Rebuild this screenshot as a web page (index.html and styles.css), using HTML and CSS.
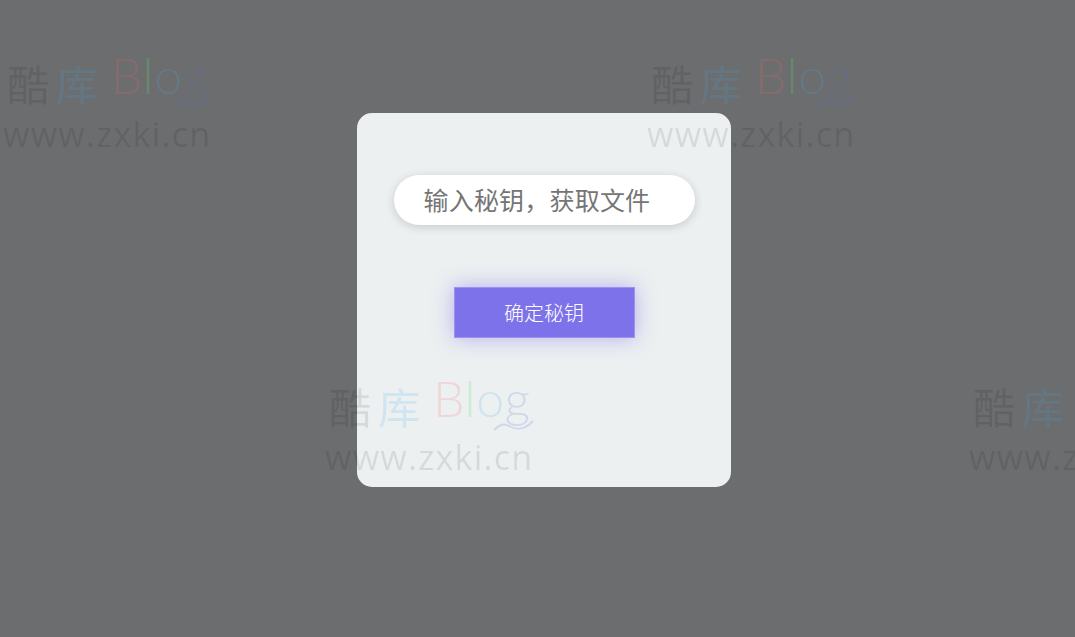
FILE: index.html
```html
<!DOCTYPE html>
<html>
<head>
    <meta charset="utf-8">
    <link rel="stylesheet" href="styles.css">
</head>
<body>
    <div class="dialog">
        <input class="key-input" type="text" placeholder="输入秘钥，获取文件">
        <button class="key-btn">确定秘钥</button>
    </div>

    <!-- watermark tiles, they lie over the whole page -->
    <div class="mark mark-a">
        <div class="mark-top"><span class="mark-ku">酷</span><span class="mark-lib">库</span><span class="mark-blog"><i class="c-r">B</i><i class="c-g">l</i><i class="c-b">o</i><i class="c-p">g</i></span></div>
        <svg class="mark-wave" width="44" height="14" viewBox="0 0 44 14"><path d="M2 12C7 7 11 5 17 8C24 12 33 12 41 3"/></svg>
        <div class="mark-url">www.zxki.cn</div>
    </div>
    <div class="mark mark-b">
        <div class="mark-top"><span class="mark-ku">酷</span><span class="mark-lib">库</span><span class="mark-blog"><i class="c-r">B</i><i class="c-g">l</i><i class="c-b">o</i><i class="c-p">g</i></span></div>
        <svg class="mark-wave" width="44" height="14" viewBox="0 0 44 14"><path d="M2 12C7 7 11 5 17 8C24 12 33 12 41 3"/></svg>
        <div class="mark-url">www.zxki.cn</div>
    </div>
    <div class="mark mark-c">
        <div class="mark-top"><span class="mark-ku">酷</span><span class="mark-lib">库</span><span class="mark-blog"><i class="c-r">B</i><i class="c-g">l</i><i class="c-b">o</i><i class="c-p">g</i></span></div>
        <svg class="mark-wave" width="44" height="14" viewBox="0 0 44 14"><path d="M2 12C7 7 11 5 17 8C24 12 33 12 41 3"/></svg>
        <div class="mark-url">www.zxki.cn</div>
    </div>
    <div class="mark mark-d">
        <div class="mark-top"><span class="mark-ku">酷</span><span class="mark-lib">库</span><span class="mark-blog"><i class="c-r">B</i><i class="c-g">l</i><i class="c-b">o</i><i class="c-p">g</i></span></div>
        <svg class="mark-wave" width="44" height="14" viewBox="0 0 44 14"><path d="M2 12C7 7 11 5 17 8C24 12 33 12 41 3"/></svg>
        <div class="mark-url">www.zxki.cn</div>
    </div>
</body>
</html>
```

FILE: styles.css
```css
html, body {
    height: 100%;
}
body {
    margin: 0;
    padding: 112.5px 0 0 357px;
    box-sizing: border-box;
    background-color: #6c6d6f;
    font-family: "Noto Sans CJK SC", sans-serif;
    overflow: hidden;
    position: relative;
}
.dialog {
    width: 374px;
    height: 374.5px;
    box-sizing: border-box;
    padding-top: 62.5px;
    background-color: #ecf0f1;
    border-radius: 15px;
    display: flex;
    flex-direction: column;
    align-items: center;
    gap: 62px;
}
.key-input {
    width: 301px;
    height: 50px;
    box-sizing: border-box;
    padding: 0 30px 2px;
    border: none;
    border-radius: 25px;
    background: #fff;
    box-shadow: 0 2px 10px rgba(0, 0, 0, 0.16);
    font-family: "Noto Sans CJK SC", sans-serif;
    font-size: 25px;
    letter-spacing: 0.2px;
    outline: none;
}
.key-input::placeholder {
    color: #757575;
    opacity: 1;
}
.key-btn {
    width: 181px;
    height: 50.5px;
    border: 1px solid #9a93f0;
    background-color: #7d72ea;
    box-shadow: 0 0 20px rgba(125, 114, 234, 0.5);
    color: #fff;
    font-family: "Noto Sans CJK SC", sans-serif;
    font-size: 20px;
    font-weight: 300;
}
.mark {
    position: absolute;
    width: 220px;
    height: 100px;
    pointer-events: none;
    white-space: nowrap;
}
.mark-a { left: 3px; top: 52px; }
.mark-b { left: 647px; top: 52px; }
.mark-c { left: 325px; top: 375px; }
.mark-d { left: 969px; top: 375px; }
.mark-top {
    display: flex;
    height: 60px;
    align-items: flex-start;
}
.mark-ku, .mark-lib {
    font-size: 42px;
    font-weight: 400;
    line-height: 60px;
    margin-top: 1px;
}
.mark-ku {
    color: rgba(0, 0, 0, 0.11);
    margin-left: 4px;
    margin-right: 7px;
}
.mark-lib {
    color: rgba(60, 170, 230, 0.18);
}
.mark-blog {
    font-family: Lato, sans-serif;
    font-size: 50px;
    font-weight: 300;
    line-height: 50px;
    margin-left: 13px;
    margin-top: -2px;
    letter-spacing: 0.5px;
}
.mark-blog i {
    font-style: normal;
}
.c-r { color: rgba(255, 100, 100, 0.18); }
.c-g { color: rgba(90, 230, 110, 0.22); }
.c-b { color: rgba(70, 170, 230, 0.18); }
.c-p { color: rgba(90, 110, 200, 0.18); }
.mark-wave {
    position: absolute;
    left: 167px;
    top: 43px;
    fill: none;
    stroke: rgba(90, 110, 200, 0.18);
    stroke-width: 2;
}
.mark-url {
    font-family: "Open Sans", sans-serif;
    font-size: 34px;
    font-weight: 400;
    line-height: 40px;
    letter-spacing: 1.3px;
    color: rgba(0, 0, 0, 0.1);
    margin-top: 2px;
}
```
